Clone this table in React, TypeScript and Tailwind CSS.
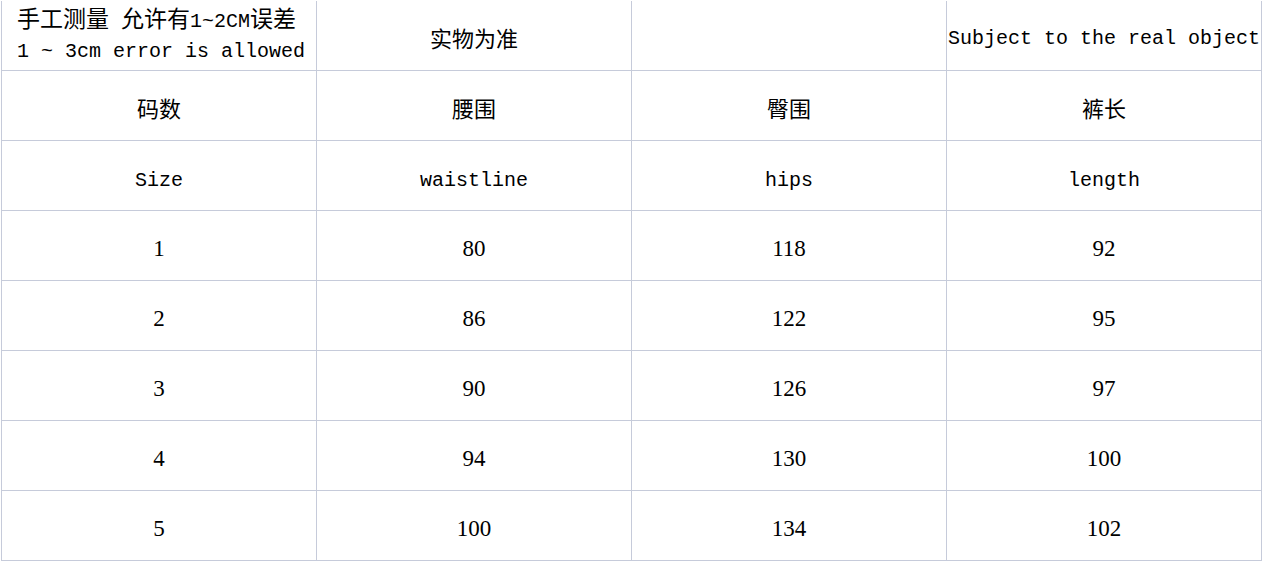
const cjk = "font-['Noto_Sans_CJK_SC',sans-serif]";
const mono = "font-['Liberation_Mono','Noto_Sans_CJK_SC',monospace]";
const serif = "font-['Liberation_Serif','Noto_Sans_CJK_SC',serif]";

const rows = [
  ["1", "80", "118", "92"],
  ["2", "86", "122", "95"],
  ["3", "90", "126", "97"],
  ["4", "94", "130", "100"],
  ["5", "100", "134", "102"],
];

function Cell({ children, className = "" }: { children?: React.ReactNode; className?: string }) {
  return (
    <div
      className={`h-[70px] border-r border-b border-[#c6cbda] flex items-center justify-center overflow-hidden text-black ${className}`}
    >
      {children}
    </div>
  );
}

export default function App() {
  const zh = `${cjk} text-[22px] pt-1`;
  const en = `${mono} text-[20px] pt-[10px]`;
  return (
    <div className="bg-white w-[1263px] h-[561px] pl-px pt-px">
      <div className="grid grid-cols-[repeat(4,315px)] border-l border-[#c6cbda]">
        <div className="h-[70px] border-r border-b border-[#c6cbda] overflow-hidden pl-[15px] pt-[1px] text-black">
          <div className={`${cjk} text-[23px] leading-[30px] whitespace-nowrap`}>
            手工测量<span className={mono + " text-[20px]"}> </span>允许有
            <span className={mono + " text-[20px]"}>1~2CM</span>误差
          </div>
          <div className={`${mono} text-[20px] leading-[30px] whitespace-pre`}>1 ~ 3cm error is allowed</div>
        </div>
        <Cell className={`${cjk} text-[22px] pt-1`}>实物为准</Cell>
        <Cell />
        <Cell className={`${mono} text-[20px] pt-[6px] whitespace-nowrap`}>Subject to the real object</Cell>

        <Cell className={zh}>码数</Cell>
        <Cell className={zh}>腰围</Cell>
        <Cell className={zh}>臀围</Cell>
        <Cell className={zh}>裤长</Cell>

        <Cell className={en}>Size</Cell>
        <Cell className={en}>waistline</Cell>
        <Cell className={en}>hips</Cell>
        <Cell className={en}>length</Cell>

        {rows.map((r, i) =>
          r.map((v, j) => (
            <Cell key={`${i}-${j}`} className={`${serif} text-[23px] pt-2`}>
              {v}
            </Cell>
          ))
        )}
      </div>
    </div>
  );
}
